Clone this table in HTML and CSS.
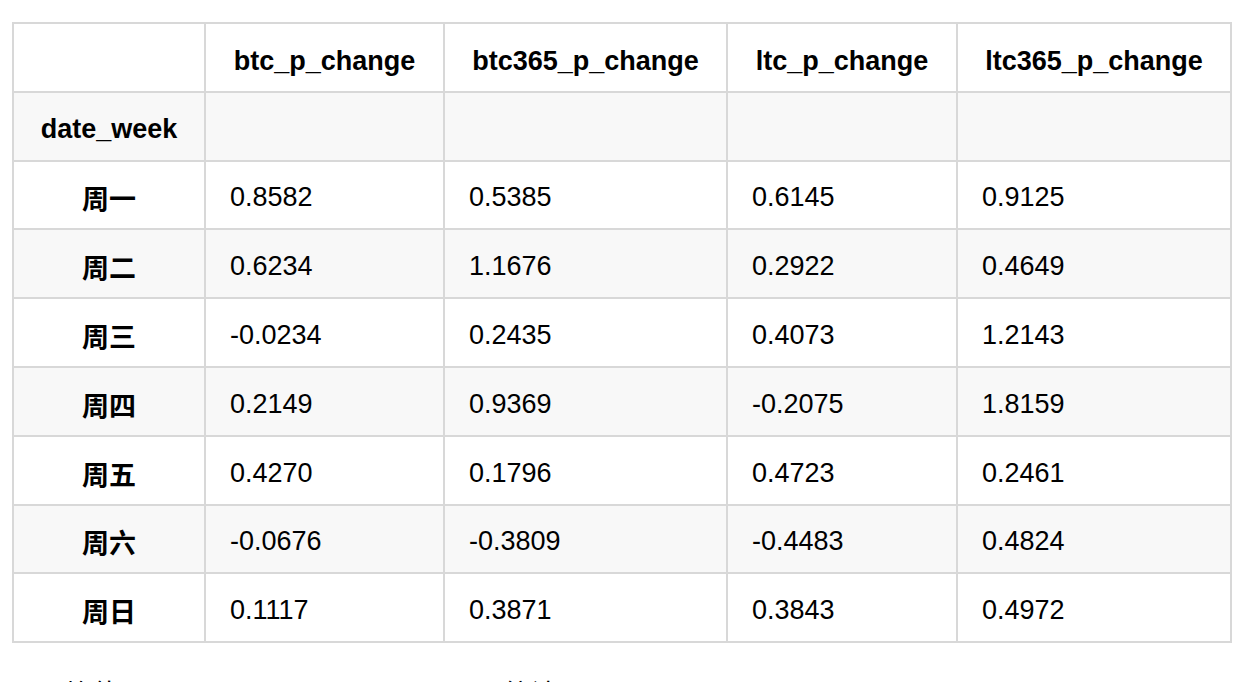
FILE: index.html
```html
<!DOCTYPE html>
<html lang="zh">
<head>
<meta charset="utf-8">
<title>date_week</title>
<link rel="stylesheet" href="styles.css">
</head>
<body>
<table class="data">
  <colgroup>
    <col class="c-idx">
    <col class="c-btc">
    <col class="c-btc365">
    <col class="c-ltc">
    <col class="c-ltc365">
  </colgroup>
  <thead>
    <tr>
      <th></th>
      <th>btc_p_change</th>
      <th>btc365_p_change</th>
      <th>ltc_p_change</th>
      <th>ltc365_p_change</th>
    </tr>
    <tr class="alt">
      <th>date_week</th>
      <th></th>
      <th></th>
      <th></th>
      <th></th>
    </tr>
  </thead>
  <tbody>
    <tr><th>周一</th><td>0.8582</td><td>0.5385</td><td>0.6145</td><td>0.9125</td></tr>
    <tr class="alt"><th>周二</th><td>0.6234</td><td>1.1676</td><td>0.2922</td><td>0.4649</td></tr>
    <tr><th>周三</th><td>-0.0234</td><td>0.2435</td><td>0.4073</td><td>1.2143</td></tr>
    <tr class="alt"><th>周四</th><td>0.2149</td><td>0.9369</td><td>-0.2075</td><td>1.8159</td></tr>
    <tr><th>周五</th><td>0.4270</td><td>0.1796</td><td>0.4723</td><td>0.2461</td></tr>
    <tr class="alt"><th>周六</th><td>-0.0676</td><td>-0.3809</td><td>-0.4483</td><td>0.4824</td></tr>
    <tr><th>周日</th><td>0.1117</td><td>0.3871</td><td>0.3843</td><td>0.4972</td></tr>
  </tbody>
</table>
<p class="note">平均值 mean and average over weeks 统计</p>
</body>
</html>
```

FILE: styles.css
```css
html, body {
  margin: 0;
  padding: 0;
  background: #ffffff;
}

body {
  padding: 22px 8px 0 12px;
  font-family: "Liberation Sans", Arial, "Noto Sans CJK SC", sans-serif;
  color: #000;
}

.data {
  width: 1220px;
  table-layout: fixed;
  border-collapse: separate;
  border-spacing: 0;
  border-top: 2px solid #d8d8d8;
  border-left: 2px solid #d8d8d8;
  font-size: 27px;
}

.c-idx { width: 192px; }
.c-btc { width: 239px; }
.c-btc365 { width: 283px; }
.c-ltc { width: 230px; }
.c-ltc365 { width: 274px; }

.data th,
.data td {
  box-sizing: border-box;
  height: 68.8px;
  padding: 6px 24px 0;
  border-right: 2px solid #d8d8d8;
  border-bottom: 2px solid #d8d8d8;
  vertical-align: middle;
  white-space: nowrap;
}

.data th {
  font-weight: bold;
  text-align: center;
  font-family: "Liberation Sans", Arial, "Noto Sans CJK SC", sans-serif;
}

.data thead tr:first-child th {
  padding-top: 8px;
}

.data td {
  text-align: left;
  font-weight: normal;
}

.data tr.alt th,
.data tr.alt td {
  background: #f8f8f8;
}

.note {
  margin: 31px 0 0 26px;
  font-size: 27px;
  line-height: 1.6;
  font-family: "Liberation Sans", Arial, "Noto Sans CJK SC", sans-serif;
}
```
